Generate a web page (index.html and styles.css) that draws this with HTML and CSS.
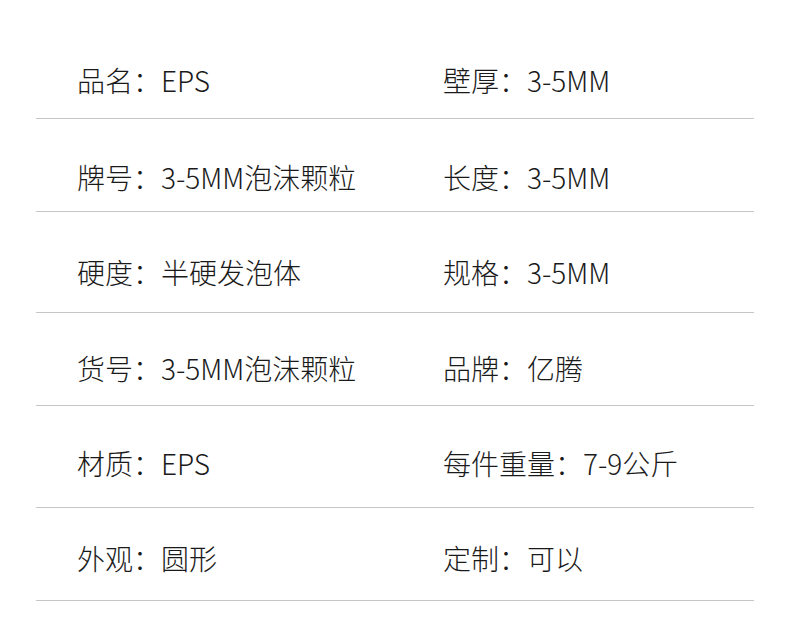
FILE: index.html
```html
<!DOCTYPE html>
<html lang="zh">
<head>
<meta charset="utf-8">
<link rel="stylesheet" href="styles.css">
</head>
<body>
<div class="spec">
  <div class="row r1"><div class="cell">品名：EPS</div><div class="cell">壁厚：3-5MM</div></div>
  <div class="row r2"><div class="cell">牌号：3-5MM泡沫颗粒</div><div class="cell">长度：3-5MM</div></div>
  <div class="row r3"><div class="cell">硬度：半硬发泡体</div><div class="cell">规格：3-5MM</div></div>
  <div class="row r4"><div class="cell">货号：3-5MM泡沫颗粒</div><div class="cell">品牌：亿腾</div></div>
  <div class="row r5"><div class="cell">材质：EPS</div><div class="cell">每件重量：7-9公斤</div></div>
  <div class="row r6"><div class="cell">外观：圆形</div><div class="cell">定制：可以</div></div>
</div>
</body>
</html>
```

FILE: styles.css
```css
html, body {
  margin: 0;
  padding: 0;
  background: #ffffff;
}
.spec {
  margin-left: 36px;
  width: 718px;
  font-family: "Noto Sans CJK SC", "Noto Sans", sans-serif;
  font-size: 28px;
  font-weight: 300;
  color: #1a1a1a;
}
.row {
  display: grid;
  grid-template-columns: 366px 1fr;
  padding-left: 41px;
  border-bottom: 1px solid #c6c6c6;
  line-height: 40px;
}
.cell {
  white-space: nowrap;
}
.r1 { padding-top: 60px; padding-bottom: 18px; }
.r2 { padding-top: 38px; padding-bottom: 14px; }
.r3 { padding-top: 40px; padding-bottom: 20px; }
.r4 { padding-top: 35px; padding-bottom: 17px; }
.r5 { padding-top: 37px; padding-bottom: 24px; }
.r6 { padding-top: 30px; padding-bottom: 22px; }
```
